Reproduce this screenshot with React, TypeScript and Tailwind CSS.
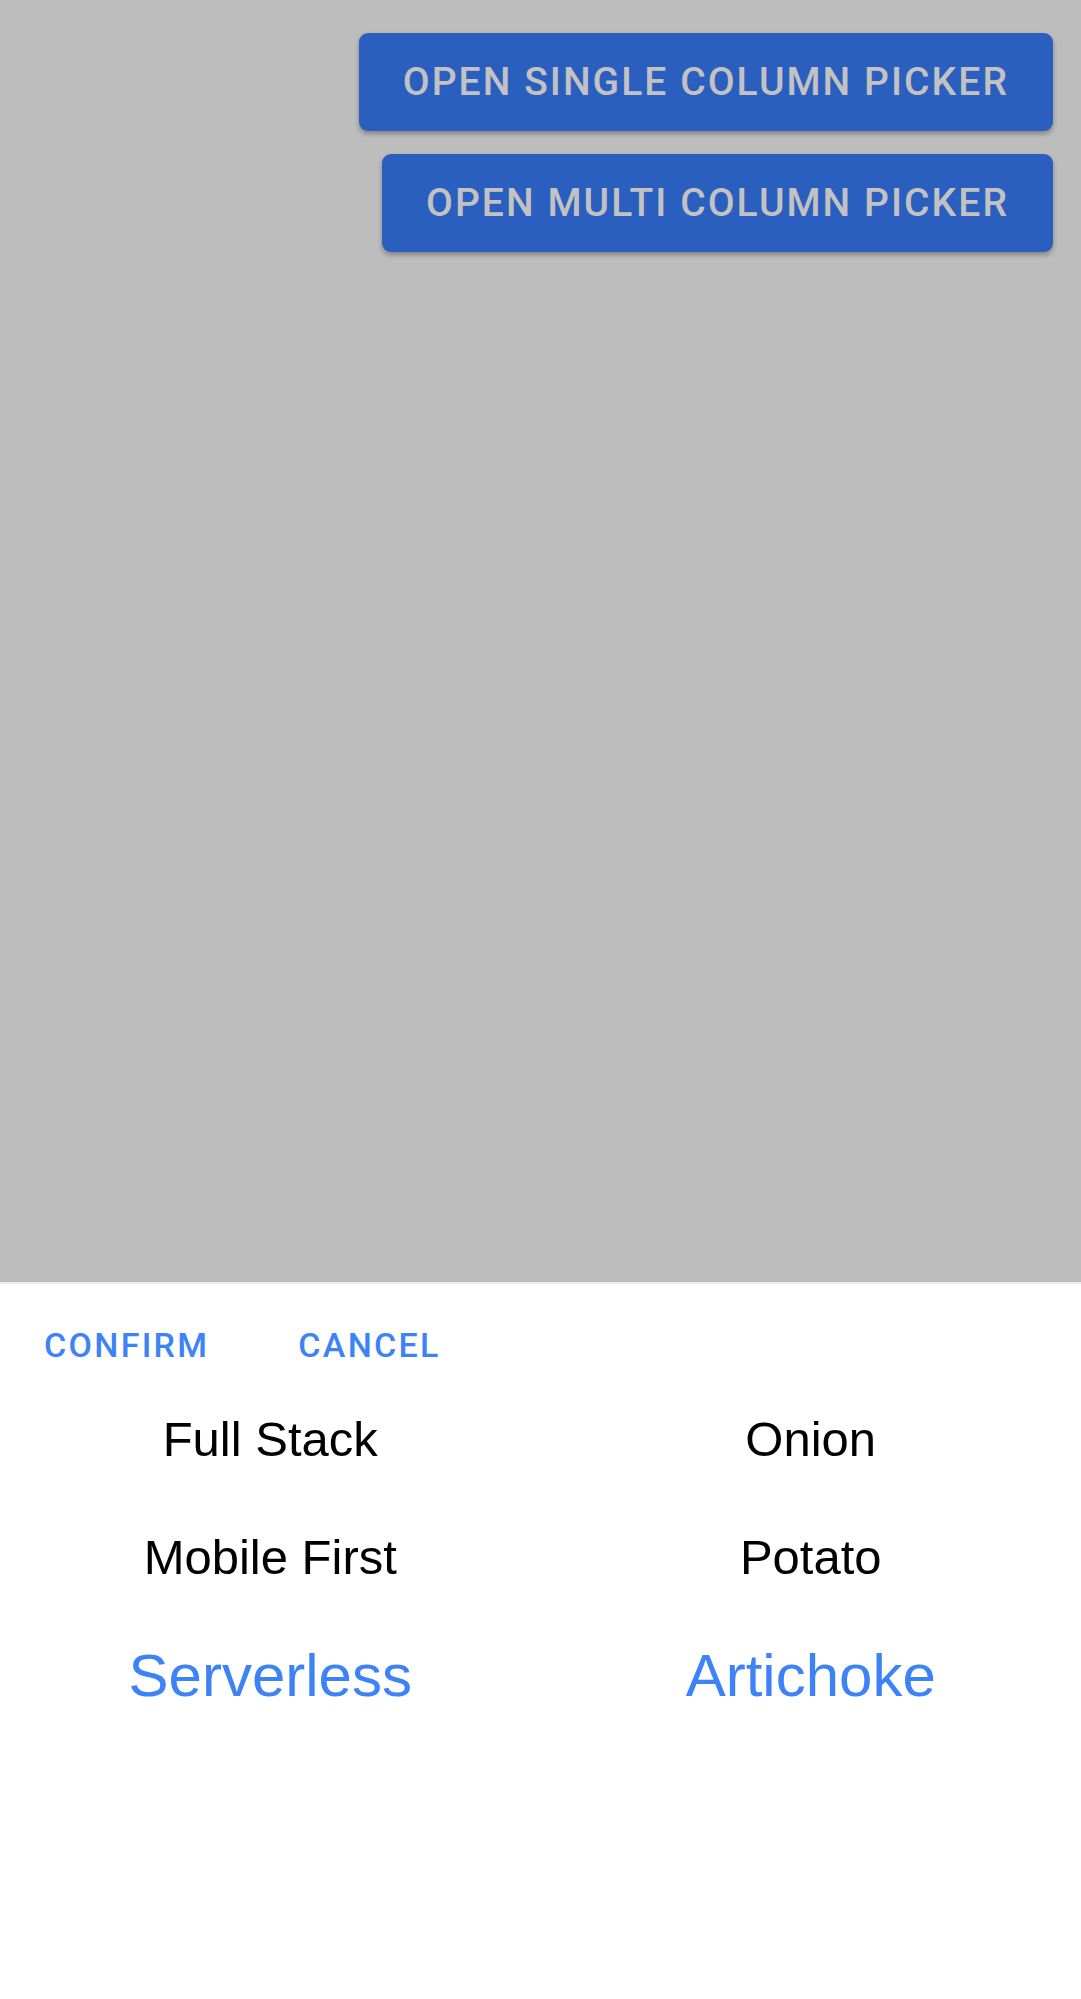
const singleColumn = ['Full Stack', 'Mobile First', 'Serverless']
const multiColumn = ['Onion', 'Potato', 'Artichoke']

function PickerColumn({ items, selected }: { items: string[]; selected: number }) {
  return (
    <div className="flex flex-1 flex-col">
      {items.map((item, i) => (
        <div
          key={item}
          className={`flex h-[118px] items-center justify-center font-['Liberation_Sans',Arial,sans-serif] ${
            i === selected ? 'text-[60px] text-[#3d83f7]' : 'text-[49px] text-black'
          }`}
        >
          {item}
        </div>
      ))}
    </div>
  )
}

export default function App() {
  return (
    <div className="flex h-[1999px] w-full flex-col font-['Roboto',sans-serif]">
      <div className="flex flex-1 flex-col items-end gap-[23px] bg-[#bdbdbd] pr-[28px] pt-[33px]">
        <button className="flex h-[98px] items-center rounded-[9px] bg-[#2b5fbf] px-[44px] text-[39px] font-medium uppercase tracking-[2.05px] text-[#c2c2c2] shadow-[0_3px_5px_rgba(0,0,0,0.3)]">
          Open single column picker
        </button>
        <button className="flex h-[98px] items-center rounded-[9px] bg-[#2b5fbf] px-[44px] text-[39px] font-medium uppercase tracking-[2.05px] text-[#c2c2c2] shadow-[0_3px_5px_rgba(0,0,0,0.3)]">
          Open multi column picker
        </button>
      </div>

      <div className="flex h-[717px] flex-col border-t-2 border-[#ededed] bg-white">
        <div className="flex h-[97px] items-end pb-[16px] pl-[44px]">
          <button className="text-[34px] font-medium uppercase leading-[40px] tracking-[2.3px] text-[#3d83f7]">
            Confirm
          </button>
          <button className="ml-[89px] text-[34px] font-medium uppercase leading-[40px] tracking-[2.3px] text-[#3d83f7]">
            Cancel
          </button>
        </div>
        <div className="flex">
          <PickerColumn items={singleColumn} selected={2} />
          <PickerColumn items={multiColumn} selected={2} />
        </div>
      </div>
    </div>
  )
}
